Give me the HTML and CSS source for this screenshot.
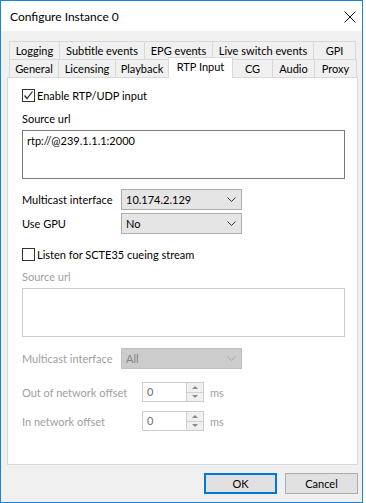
FILE: index.html
```html
<!DOCTYPE html>
<html lang="en">
<head>
  <meta charset="UTF-8" />
  <title>Configure Instance 0</title>
  <link rel="stylesheet" href="styles.css">
</head>
<body>

  <div class="window">

    <!-- Title bar -->
    <div class="titlebar">
      <span class="title">Configure Instance 0</span>
      <svg class="close" width="12" height="12" viewBox="0 0 12 12">
        <path d="M0.5 0.5 L11.5 11.5 M11.5 0.5 L0.5 11.5" stroke="#111" stroke-width="1" fill="none" />
      </svg>
    </div>

    <div class="client">

      <!-- Tabs -->
      <div class="tabs">
        <div class="tab-row">
          <div class="tab w51">Logging</div>
          <div class="tab w86">Subtitle events</div>
          <div class="tab w69">EPG events</div>
          <div class="tab w102">Live switch events</div>
          <div class="tab w43">GPI</div>
        </div>
        <div class="tab-row">
          <div class="tab w50">General</div>
          <div class="tab w58">Licensing</div>
          <div class="tab w54">Playback</div>
          <div class="tab w65 selected">RTP Input</div>
          <div class="tab w41">CG</div>
          <div class="tab w43">Audio</div>
          <div class="tab w43">Proxy</div>
        </div>
      </div>

      <!-- RTP Input page -->
      <div class="panel">

        <label class="check first">
          <span class="box">
            <svg width="11" height="11" viewBox="0 0 11 11">
              <path d="M1.5 5.5 L4 8.5 L9.5 1.5" stroke="#222" stroke-width="1.2" fill="none" />
            </svg>
          </span>
          <span>Enable RTP/UDP input</span>
        </label>

        <div class="field-label gap9">Source url</div>
        <div class="textbox">rtp://@239.1.1.1:2000</div>

        <div class="row gap10">
          <span class="row-label">Multicast interface</span>
          <div class="combo">
            <span>10.174.2.129</span>
            <svg width="9" height="5" viewBox="0 0 9 5"><path d="M0.5 0.5 L4.5 4.5 L8.5 0.5" stroke="#333" fill="none" /></svg>
          </div>
        </div>
        <div class="row gap3">
          <span class="row-label">Use GPU</span>
          <div class="combo">
            <span>No</span>
            <svg width="9" height="5" viewBox="0 0 9 5"><path d="M0.5 0.5 L4.5 4.5 L8.5 0.5" stroke="#333" fill="none" /></svg>
          </div>
        </div>

        <label class="check gap14">
          <span class="box"></span>
          <span>Listen for SCTE35 cueing stream</span>
        </label>

        <div class="field-label gap8 disabled">Source url</div>
        <div class="textbox disabled"></div>

        <div class="row gap11 disabled">
          <span class="row-label">Multicast interface</span>
          <div class="combo">
            <span>All</span>
            <svg width="9" height="5" viewBox="0 0 9 5"><path d="M0.5 0.5 L4.5 4.5 L8.5 0.5" stroke="#a8a8a8" fill="none" /></svg>
          </div>
        </div>

        <div class="row spin-row gap13 disabled">
          <span class="row-label">Out of network offset</span>
          <div class="spin">
            <span class="spin-value">0</span>
            <div class="spin-btns">
              <span class="spin-btn"><i class="up"></i></span>
              <span class="spin-btn"><i class="down"></i></span>
            </div>
          </div>
          <span class="unit">ms</span>
        </div>
        <div class="row spin-row gap9 disabled">
          <span class="row-label">In network offset</span>
          <div class="spin">
            <span class="spin-value">0</span>
            <div class="spin-btns">
              <span class="spin-btn"><i class="up"></i></span>
              <span class="spin-btn"><i class="down"></i></span>
            </div>
          </div>
          <span class="unit">ms</span>
        </div>

      </div>

      <!-- Dialog buttons -->
      <div class="buttons">
        <button class="default">OK</button>
        <button>Cancel</button>
      </div>

    </div>
  </div>

</body>
</html>
```

FILE: styles.css
```css
body {
  margin: 0;
  background-color: #fff;
  font-family: Lato, "Open Sans", sans-serif;
  font-size: 11px;
  color: #000;
}

.window {
  width: 363px;
  height: 503px;
  box-sizing: border-box;
  border: 1px solid #1883d7;
  display: flex;
  flex-direction: column;
}

.titlebar {
  height: 30px;
  background-color: #fff;
  display: flex;
  align-items: center;
  padding: 1px 0 0 9px;
  box-sizing: border-box;
  font-size: 12px;
}

.title {
  flex: 1;
}

.close {
  margin-right: 6px;
}

.client {
  flex: 1;
  background-color: #f0f0f0;
  padding: 10px 4px 0 6px;
  display: flex;
  flex-direction: column;
}

/* tabs */

.tabs {
  margin-left: 2px;
}

.tab-row {
  display: flex;
  align-items: flex-start;
  height: 18px;
}

.tab {
  height: 18px;
  box-sizing: border-box;
  border: 1px solid #d9d9d9;
  border-bottom: none;
  background-color: #f0f0f0;
  text-align: center;
  line-height: 17px;
  margin-left: -1px;
  white-space: nowrap;
}

.tab:first-child {
  margin-left: 0;
}

.tab.selected {
  position: relative;
  z-index: 2;
  height: 21px;
  margin-top: -2px;
  background-color: #fff;
  line-height: 17px;
}

.w41 { width: 41px; }
.w43 { width: 43px; }
.w50 { width: 50px; }
.w51 { width: 51px; }
.w54 { width: 54px; }
.w58 { width: 58px; }
.w65 { width: 65px; }
.w69 { width: 69px; }
.w86 { width: 86px; }
.w102 { width: 102px; }

/* page */

.panel {
  height: 388px;
  box-sizing: border-box;
  border: 1px solid #d9d9d9;
  background-color: #fff;
  padding: 0 12px 0 14px;
  display: flex;
  flex-direction: column;
}

.gap3 { margin-top: 3px; }
.gap8 { margin-top: 8px; }
.gap9 { margin-top: 9px; }
.gap10 { margin-top: 10px; }
.gap11 { margin-top: 11px; }
.gap13 { margin-top: 13px; }
.gap14 { margin-top: 14px; }

.check {
  display: flex;
  align-items: center;
  gap: 2px;
  height: 13px;
}

.check.first {
  margin-top: 11px;
}

.box {
  width: 13px;
  height: 13px;
  box-sizing: border-box;
  border: 1px solid #333;
  background-color: #fff;
  display: flex;
  align-items: center;
  justify-content: center;
}

.field-label {
  height: 16px;
  line-height: 16px;
}

.textbox {
  margin-top: 3px;
  width: 323px;
  height: 49px;
  box-sizing: border-box;
  border: 1px solid #7a7a7a;
  padding: 2px 4px;
  line-height: 16px;
}

.disabled {
  color: #a0a0a0;
}

.textbox.disabled {
  border-color: #cccccc;
}

.row {
  display: flex;
  align-items: center;
}

.row-label {
  width: 99px;
}

.combo {
  width: 121px;
  height: 21px;
  box-sizing: border-box;
  border: 1px solid #adadad;
  background-color: #e5e5e5;
  padding: 0 5px 0 4px;
  display: flex;
  align-items: center;
  justify-content: space-between;
}

.row.disabled .combo {
  background-color: #cccccc;
  border-color: #bfbfbf;
  color: #838383;
}

/* spin boxes */

.spin-row .row-label {
  width: 120px;
}

.spin {
  width: 62px;
  height: 20px;
  box-sizing: border-box;
  border: 1px solid #cccccc;
  display: flex;
}

.spin-value {
  flex: 1;
  padding-left: 4px;
  line-height: 18px;
  color: #6d6d6d;
}

.spin-btns {
  width: 17px;
  display: flex;
  flex-direction: column;
}

.spin-btn {
  flex: 1;
  background-color: #f0f0f0;
  border-left: 1px solid #d0d0d0;
  display: flex;
  align-items: center;
  justify-content: center;
}

.spin-btn + .spin-btn {
  border-top: 1px solid #d0d0d0;
}

.spin-btn i {
  width: 0;
  height: 0;
  border-left: 3px solid transparent;
  border-right: 3px solid transparent;
}

.spin-btn .up {
  border-bottom: 3px solid #8a8a8a;
}

.spin-btn .down {
  border-top: 3px solid #8a8a8a;
}

.unit {
  margin-left: 6px;
}

/* dialog buttons */

.buttons {
  margin-top: 8px;
  display: flex;
  justify-content: flex-end;
  gap: 8px;
}

button {
  width: 73px;
  height: 21px;
  box-sizing: border-box;
  border: 1px solid #adadad;
  background-color: #e1e1e1;
  font-family: inherit;
  font-size: 11px;
  color: #000;
  padding: 0;
}

button.default {
  border: 2px solid #0078d7;
}
```
